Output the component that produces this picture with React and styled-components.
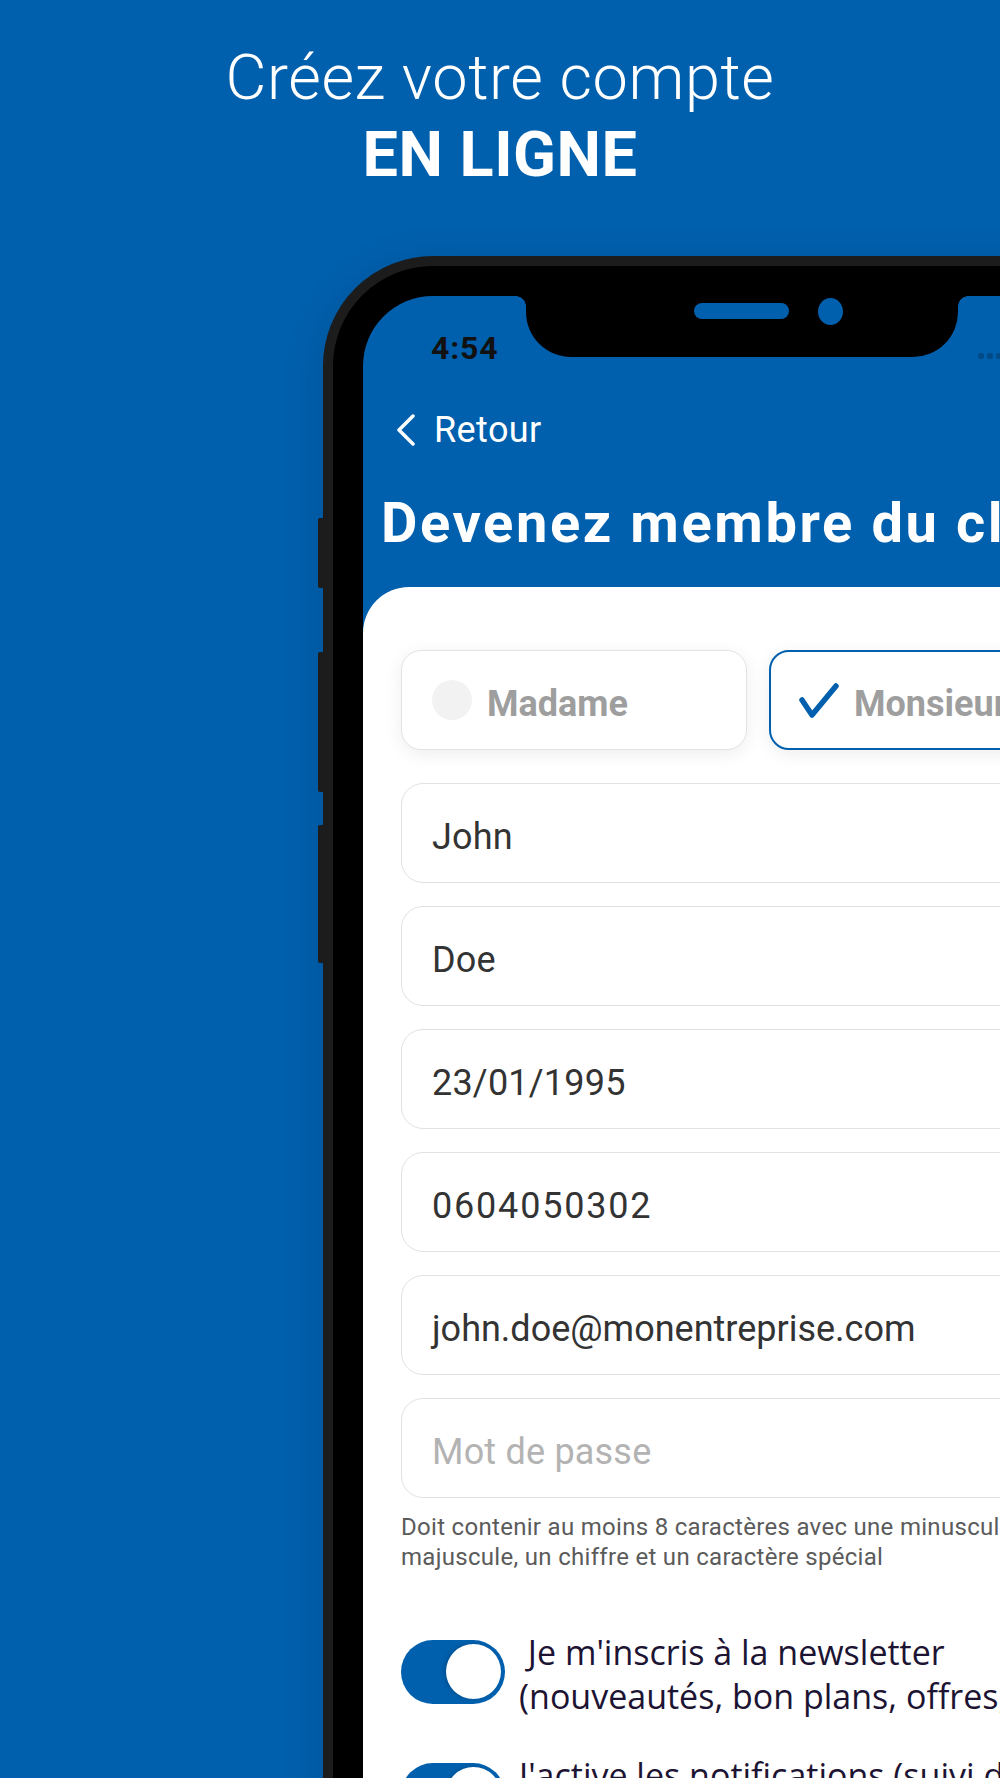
import styled, { createGlobalStyle } from "styled-components";

const GlobalStyle = createGlobalStyle`
  body {
    margin: 0;
    background: #0060ad;
    font-family: Roboto, "Liberation Sans", sans-serif;
  }
`;

const Page = styled.div`
  width: 1000px;
  height: 1778px;
  overflow: hidden;
  background: #0060ad;
`;

const Header = styled.header`
  padding-top: 39px;
  text-align: center;
  color: #fff;
  font-size: 63px;
  line-height: 77px;
`;

const HeaderLight = styled.div`
  font-weight: 300;
  letter-spacing: 0.6px;
`;

const HeaderBold = styled.div`
  font-weight: 700;
  letter-spacing: 0.5px;
`;

const Frame = styled.div`
  position: relative;
  box-sizing: border-box;
  margin: 63px 0 0 323px;
  width: 870px;
  height: 1700px;
  padding: 30px;
  border: 10px solid #1c1c1c;
  border-radius: 110px;
  background: #000;
  box-shadow: 0 10px 40px rgba(0, 20, 60, 0.18);
`;

const SideButton = styled.div`
  position: absolute;
  left: -15px;
  top: ${(p) => p.top}px;
  width: 5px;
  height: ${(p) => p.h}px;
  background: #1c1c1c;
  border-radius: 2px 0 0 2px;
`;

const Screen = styled.div`
  position: relative;
  display: flex;
  flex-direction: column;
  height: 100%;
  border-radius: 70px;
  overflow: hidden;
  background: #0060ae;
`;

const Notch = styled.div`
  position: absolute;
  top: 0;
  left: 163px;
  width: 432px;
  height: 61px;
  box-sizing: border-box;
  padding: 1px 0 0 168px;
  background: #000;
  border-radius: 0 0 45px 45px;

  &::before,
  &::after {
    content: "";
    position: absolute;
    top: 0;
    width: 10px;
    height: 10px;
  }
  &::before {
    left: -10px;
    background: radial-gradient(circle at 0 100%, transparent 9.5px, #000 10px);
  }
  &::after {
    right: -10px;
    background: radial-gradient(circle at 100% 100%, transparent 9.5px, #000 10px);
  }
`;

const Sensors = styled.div`
  display: flex;
  align-items: center;
  gap: 29px;
  height: 28px;
`;

const Speaker = styled.div`
  width: 95px;
  height: 16px;
  border-radius: 8px;
  background: #0060ae;
`;

const Camera = styled.div`
  width: 25px;
  height: 27px;
  border-radius: 50%;
  background: #0060ae;
`;

const StatusBar = styled.div`
  display: flex;
  align-items: center;
  padding: 34px 0 0 68px;
  height: 36px;
`;

const Time = styled.span`
  width: 547px;
  flex-shrink: 0;
  font-size: 32px;
  font-weight: 700;
  letter-spacing: 0.8px;
  line-height: 36px;
  color: #111;
`;

const Dots = styled.div`
  display: flex;
  gap: 3px;
  margin-top: 15px;
`;

const Dot = styled.span`
  width: 6px;
  height: 6px;
  border-radius: 2px;
  background: rgba(0, 0, 0, 0.22);
`;

const BackRow = styled.div`
  display: flex;
  align-items: center;
  gap: 18px;
  margin-top: 42px;
  padding-left: 33px;
  height: 44px;
  color: #fff;
  font-size: 36px;
  letter-spacing: 0.4px;
  line-height: 44px;
`;

const Title = styled.h1`
  margin: 39px 0 0;
  padding-left: 18px;
  color: #fff;
  font-size: 56px;
  font-weight: 700;
  letter-spacing: 2.6px;
  line-height: 64px;
  white-space: nowrap;
`;

const Sheet = styled.div`
  flex: 1;
  margin-top: 32px;
  padding: 63px 38px 0;
  background: #fff;
  border-radius: 46px 46px 0 0;
`;

const GenderRow = styled.div`
  display: grid;
  grid-template-columns: 1fr 1fr;
  gap: 22px;
`;

const GenderOption = styled.div`
  display: flex;
  align-items: center;
  gap: 15px;
  box-sizing: border-box;
  height: 100px;
  padding: 8px 0 0 30px;
  border: ${(p) => (p.selected ? "2px solid #0060ae" : "1.5px solid #e3e3e3")};
  border-radius: 20px;
  background: #fff;
  box-shadow: 0 4px 18px rgba(0, 0, 0, 0.07);
  color: #9e9e9e;
  font-size: 36px;
  font-weight: 700;
  white-space: nowrap;
`;

const Radio = styled.span`
  width: 40px;
  height: 40px;
  margin-top: -8px;
  border-radius: 50%;
  background: #f2f2f2;
`;

const CheckIcon = styled.svg`
  width: 40px;
  height: 40px;
  margin: -8px 0 0 -2px;
`;

const Fields = styled.div`
  display: flex;
  flex-direction: column;
  gap: 23px;
  margin-top: 33px;
`;

const Field = styled.div`
  display: flex;
  align-items: center;
  box-sizing: border-box;
  height: 100px;
  padding: 7px 0 0 30px;
  border: 1.5px solid #e2e2e2;
  border-radius: 22px;
  color: ${(p) => (p.placeholder ? "#b3b3b3" : "#333")};
  font-size: 36px;
  letter-spacing: ${(p) => p.spacing ?? 0.2}px;
  white-space: nowrap;
`;

const Hint = styled.p`
  margin: 14px 0 0;
  color: #5b5b5b;
  font-size: 24px;
  letter-spacing: 0.3px;
  line-height: 30px;
  white-space: nowrap;
`;

const Toggles = styled.div`
  display: flex;
  flex-direction: column;
  gap: 35px;
  margin-top: 58px;
`;

const ToggleRow = styled.div`
  display: flex;
  align-items: flex-start;
  gap: 14px;
`;

const Switch = styled.span`
  position: relative;
  flex-shrink: 0;
  width: 104px;
  height: 64px;
  margin-top: 10px;
  border-radius: 32px;
  background: #0060ae;

  &::after {
    content: "";
    position: absolute;
    top: 4px;
    right: 4px;
    width: 55px;
    height: 55px;
    border-radius: 50%;
    background: #fff;
    box-shadow: -2px 0 4px rgba(0, 0, 0, 0.18);
  }
`;

const ToggleLabel = styled.div`
  color: #1d1433;
  font-family: "Open Sans", Roboto, sans-serif;
  font-size: 34px;
  line-height: 44px;
  white-space: nowrap;
`;

export default function App() {
  return (
    <Page>
      <GlobalStyle />
      <Header>
        <HeaderLight>Créez votre compte</HeaderLight>
        <HeaderBold>EN LIGNE</HeaderBold>
      </Header>

      <Frame>
        <SideButton top={252} h={70} />
        <SideButton top={386} h={140} />
        <SideButton top={559} h={138} />
        <Screen>
          <Notch>
            <Sensors>
              <Speaker />
              <Camera />
            </Sensors>
          </Notch>

          <StatusBar>
            <Time>4:54</Time>
            <Dots>
              <Dot />
              <Dot />
              <Dot />
              <Dot />
            </Dots>
          </StatusBar>

          <BackRow>
            <svg width="20" height="32" viewBox="0 0 20 32" fill="none">
              <path
                d="M17 2 L3 16 L17 30"
                stroke="#fff"
                strokeWidth="3.5"
                strokeLinecap="round"
                strokeLinejoin="round"
              />
            </svg>
            Retour
          </BackRow>

          <Title>Devenez membre du club</Title>

          <Sheet>
            <GenderRow>
              <GenderOption>
                <Radio />
                Madame
              </GenderOption>
              <GenderOption selected>
                <CheckIcon viewBox="0 0 40 40" fill="none">
                  <path
                    d="M3 20 L13 35 L37 6"
                    stroke="#0060ae"
                    strokeWidth="5.5"
                    strokeLinecap="round"
                    strokeLinejoin="round"
                  />
                </CheckIcon>
                Monsieur
              </GenderOption>
            </GenderRow>

            <Fields>
              <Field>John</Field>
              <Field>Doe</Field>
              <Field>23/01/1995</Field>
              <Field spacing={1.8}>0604050302</Field>
              <Field spacing={0}>john.doe@monentreprise.com</Field>
              <Field placeholder>Mot de passe</Field>
            </Fields>

            <Hint>
              Doit contenir au moins 8 caractères avec une minuscule, une
              <br />
              majuscule, un chiffre et un caractère spécial
            </Hint>

            <Toggles>
              <ToggleRow>
                <Switch />
                <ToggleLabel>
                  {"\u00a0"}Je m'inscris à la newsletter
                  <br />
                  (nouveautés, bon plans, offres, événements)
                </ToggleLabel>
              </ToggleRow>
              <ToggleRow>
                <Switch />
                <ToggleLabel>
                  J'active les notifications (suivi de
                  <br />
                  commande, alertes)
                </ToggleLabel>
              </ToggleRow>
            </Toggles>
          </Sheet>
        </Screen>
      </Frame>
    </Page>
  );
}
